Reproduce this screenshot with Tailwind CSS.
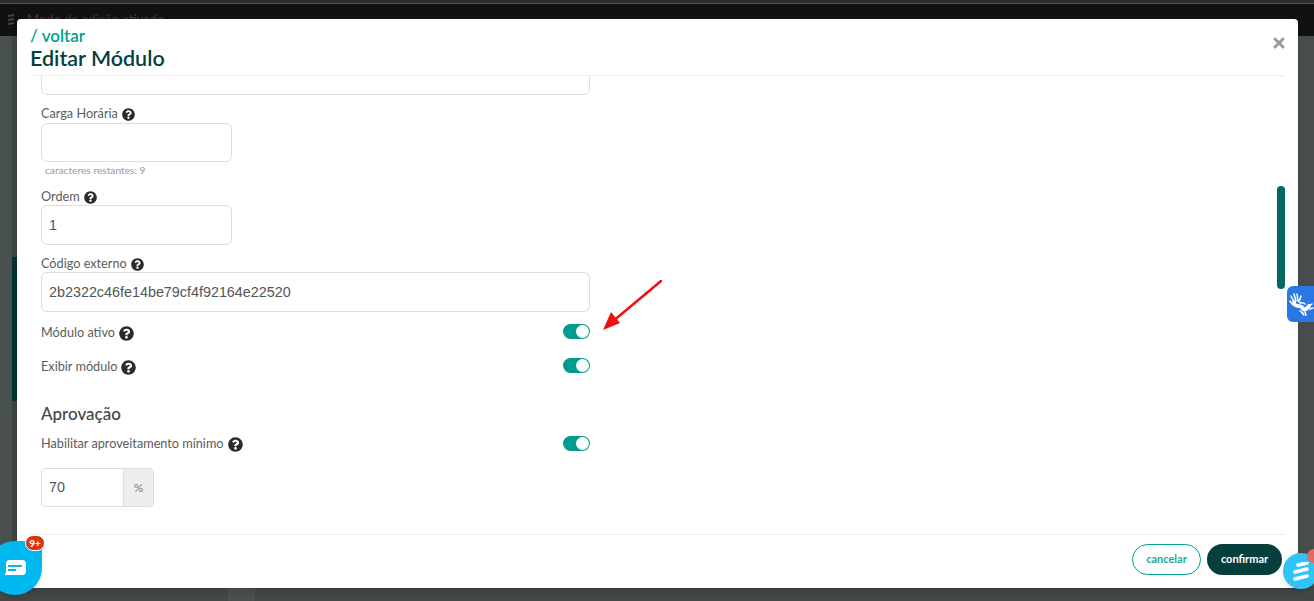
<!DOCTYPE html>
<html lang="pt-BR">
<head>
    <meta charset="UTF-8">
    <title>Editar Módulo</title>
    <script src="https://cdn.jsdelivr.net/npm/@tailwindcss/browser@4"></script>
</head>
<body class="relative h-[601px] w-[1314px] overflow-hidden bg-[#444747] font-['Lato',sans-serif]">

    <svg class="hidden">
        <symbol id="help" viewBox="0 0 512 512"><path fill="#2b2b2b" d="M504 256c0 136.997-111.043 248-248 248S8 392.997 8 256C8 119.083 119.043 8 256 8s248 111.083 248 248zM262.655 90c-54.497 0-89.255 22.957-116.549 63.758-3.536 5.286-2.353 12.415 2.715 16.258l34.699 26.31c5.205 3.947 12.621 3.008 16.665-2.122 17.864-22.658 30.113-35.797 57.303-35.797 20.429 0 45.698 13.148 45.698 32.958 0 14.976-12.363 22.667-32.534 33.976C247.128 238.528 216 254.941 216 296v4c0 6.627 5.373 12 12 12h56c6.627 0 12-5.373 12-12v-1.333c0-28.462 83.186-29.647 83.186-106.667 0-58.002-60.165-102-116.531-102zM256 338c-26.467 0-48 21.533-48 48s21.533 48 48 48 48-21.533 48-48-21.533-48-48-48z"/></symbol>
    </svg>

    <!-- page behind the modal -->
    <div class="h-[3px] bg-[#2e2e2e]"></div>
    <div class="flex h-[33px] items-center gap-[12px] border-t border-[#555555] bg-[#111111] pl-[7px] text-[13px] text-[#3a3a3a]">
        <svg width="8" height="12" viewBox="0 0 8 12"><path d="M1 2l6-1M1 6l6-1M1 10l6-1" stroke="#444444" stroke-width="2"/></svg>
        <span>Modo de edição ativado</span>
    </div>
    <div class="flex h-[552px]">
        <div class="w-[12px] bg-[#485050]"></div>
        <div class="flex w-[5px] flex-col">
            <div class="h-[221px] bg-[#3f4646]"></div>
            <div class="h-[144px] bg-[#033532]"></div>
            <div class="flex-1 bg-[#3e4242]"></div>
        </div>
        <div class="flex-1"></div>
        <div class="w-[16px] bg-[#474d4d]"></div>
    </div>
    <div class="absolute left-[228px] top-[588px] h-[13px] w-[27px] bg-[#4a5050]"></div>

    <!-- modal -->
    <div class="absolute left-[17px] top-[19px] flex h-[569px] w-[1281px] flex-col rounded-[4px] bg-white shadow-md">
        <div class="mx-[13px] flex h-[57px] shrink-0 items-start justify-between border-b border-[#eeeeee] pt-[7px]">
            <div>
                <div class="text-[17px] leading-[20px] font-semibold text-[#00a08f]">/ voltar</div>
                <div class="text-[21.5px] leading-[24px] font-semibold text-[#063f3c]">Editar Módulo</div>
            </div>
            <svg class="mt-[11px]" width="12" height="12" viewBox="0 0 12 12"><path d="M2 2l8 8M10 2l-8 8" stroke="#9a9a9a" stroke-width="3" stroke-linecap="round"/></svg>
        </div>

        <div class="relative h-[458px] shrink-0 overflow-hidden px-[24px] text-[12.7px] text-[#5c5c5c]">
            <div class="-mt-[22px] h-[41px] w-[549px] rounded-[6px] border border-[#dddddd]"></div>

            <div class="mt-[12px] flex h-[14px] items-center gap-[4px]">Carga Horária
                <svg class="size-[13px]"><use href="#help"/></svg>
            </div>
            <div class="mt-[2px] h-[39px] w-[191px] rounded-[6px] border border-[#dddddd]"></div>
            <div class="mt-[1px] pl-[4px] text-[10.2px] leading-[14px] text-[#999999]">caracteres restantes: 9</div>

            <div class="mt-[13px] mb-[1px] flex h-[14px] items-center gap-[4px]">Ordem
                <svg class="size-[13px]"><use href="#help"/></svg>
            </div>
            <div class="flex h-[40px] w-[191px] items-center rounded-[6px] border border-[#dddddd] pl-[7px] pt-[2px] font-['Liberation_Sans',sans-serif] text-[14.35px] text-[#555555]">1</div>

            <div class="mt-[12px] mb-[1px] flex h-[14px] items-center gap-[4px]">Código externo
                <svg class="size-[13px]"><use href="#help"/></svg>
            </div>
            <div class="flex h-[40px] w-[549px] items-center rounded-[6px] border border-[#dddddd] pl-[7px] pt-[2px] font-['Liberation_Sans',sans-serif] text-[14.35px] text-[#555555]">2b2322c46fe14be79cf4f92164e22520</div>

            <div class="mt-[12px] flex h-[18px] w-[549px] items-center justify-between">
                <span class="flex items-center gap-[4px]">Módulo ativo
                    <svg class="size-[15px]"><use href="#help"/></svg>
                </span>
                <span class="flex h-[15px] w-[27px] self-start justify-end rounded-full bg-[#009c8e] p-[1px]"><span class="size-[13px] rounded-full bg-white"></span></span>
            </div>
            <div class="mt-[16px] flex h-[18px] w-[549px] items-center justify-between">
                <span class="flex items-center gap-[4px]">Exibir módulo
                    <svg class="size-[15px]"><use href="#help"/></svg>
                </span>
                <span class="flex h-[15px] w-[27px] self-start justify-end rounded-full bg-[#009c8e] p-[1px]"><span class="size-[13px] rounded-full bg-white"></span></span>
            </div>

            <div class="mt-[27px] text-[17px] leading-[22px] font-medium text-[#444444]">Aprovação</div>

            <div class="mt-[11px] flex h-[16px] w-[549px] items-center justify-between">
                <span class="flex items-center gap-[4px]">Habilitar aproveitamento mínimo
                    <svg class="size-[15px]"><use href="#help"/></svg>
                </span>
                <span class="flex h-[15px] w-[27px] self-start justify-end rounded-full bg-[#009c8e] p-[1px]"><span class="size-[13px] rounded-full bg-white"></span></span>
            </div>

            <div class="mt-[16px] flex h-[39px] w-[113px] rounded-[4px] border border-[#dddddd]">
                <div class="flex flex-1 items-center pl-[7px] font-['Liberation_Sans',sans-serif] text-[14.35px] text-[#555555]">70</div>
                <div class="flex w-[30px] items-center justify-center border-l border-[#dddddd] bg-[#eeeeee] text-xs text-[#777777]">%</div>
            </div>

            <div class="absolute left-[1260px] top-[110px] h-[103px] w-[8px] rounded-full bg-[#006a62]"></div>
        </div>

        <div class="mx-[13px] flex flex-1 items-start justify-end gap-[6px] border-t border-[#eeeeee] pr-[3px] pt-[9px] text-[11px] font-bold">
            <div class="flex h-[31px] w-[69px] items-center justify-center rounded-full border border-[#00a08f] text-[#1fa596]">cancelar</div>
            <div class="flex h-[31px] w-[75px] items-center justify-center rounded-full bg-[#063f3c] text-white">confirmar</div>
        </div>
    </div>

    <!-- annotation arrow -->
    <svg class="absolute left-[600px] top-[275px]" width="66" height="58" viewBox="0 0 66 58">
        <path d="M61 6L12 47" stroke="#f01010" stroke-width="2.5" stroke-linecap="round"/>
        <path d="M3 55L11 37L20 48Z" fill="#f01010"/>
    </svg>

    <!-- sign language widget -->
    <div class="absolute left-[1287px] top-[286px] flex h-[36px] w-[27px] items-center justify-center rounded-l-[6px] bg-[#2b78e4]">
        <svg class="ml-[1px]" width="26" height="26" viewBox="0 0 26 26" fill="none" stroke="#fff" stroke-linecap="round">
            <path d="M3 5l3 6M6 3l2 7M9 3l1 7M13 5l-2 6M2 10l3 4" stroke-width="1.5"/>
            <path d="M6 11c0 3 2 4 5 4l3 1" stroke-width="3.5"/>
            <path d="M12 12c3-1 4 0 5 1" stroke-width="1.5"/>
            <path d="M15 18c2 1 4 0 6-3" stroke-width="4"/>
            <path d="M12 20l3 2M14 22l2 2M17 21l1 3M21 15l3-2M22 18l3-1" stroke-width="1.5"/>
        </svg>
    </div>

    <!-- chat bubble -->
    <div class="absolute -left-[12px] top-[541px] flex size-[54px] items-center justify-center rounded-full rounded-tr-[4px] bg-[#00b9f0] shadow-md">
        <svg width="22" height="16" viewBox="0 0 22 16"><path d="M5 0h13a4 4 0 014 4v7a4 4 0 01-4 4H1l1-3V4a4 4 0 013-4z" fill="#fff"/><path d="M4 6h14M4 10h8" stroke="#00b9f0" stroke-width="2"/></svg>
    </div>
    <div class="absolute left-[25px] top-[535px] flex h-[16px] w-[20px] items-center justify-center rounded-full border border-white bg-[#dd3311] text-[10px] font-black text-white">9+</div>

    <!-- help bubble -->
    <div class="absolute left-[1283px] top-[553px] flex h-[36px] w-[36px] items-center justify-center rounded-full bg-[#2fc4f3] shadow-md">
        <svg width="16" height="19" viewBox="0 0 16 19"><path d="M5 3l9-2M2 10l12-3M2 17l12-3" stroke="#fff" stroke-width="3.5" stroke-linecap="round"/></svg>
    </div>
    <div class="absolute left-[1307px] top-[549px] size-[14px] rounded-full bg-[#e26a62]"></div>

</body>
</html>
